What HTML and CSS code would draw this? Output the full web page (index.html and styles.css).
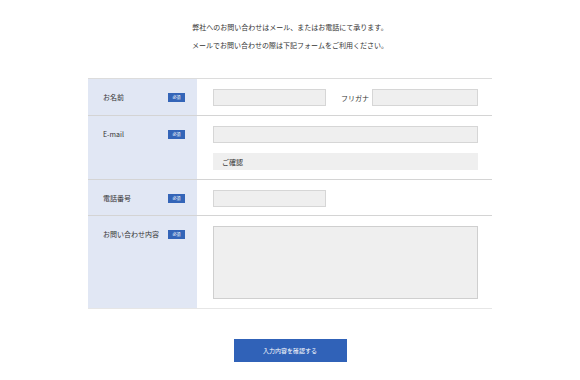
FILE: index.html
```html
<!DOCTYPE html>
<html lang="ja">
<head>
    <meta charset="UTF-8">
    <meta name="viewport" content="width=device-width, initial-scale=1.0">
    <title>お問い合わせ</title>
    <link rel="stylesheet" href="styles.css">
</head>
<body>
    <div class="contact">
        <div class="intro">
            <p>弊社へのお問い合わせはメール、またはお電話にて承ります。</p>
            <p>メールでお問い合わせの際は下記フォームをご利用ください。</p>
        </div>

        <form class="contact-form">
            <div class="form-row">
                <div class="form-label"><span>お名前</span><span class="required">必須</span></div>
                <div class="form-field">
                    <div class="field-line">
                        <input type="text" class="input-short">
                        <span class="sub-label">フリガナ</span>
                        <input type="text" class="input-kana">
                    </div>
                </div>
            </div>

            <div class="form-row">
                <div class="form-label"><span>E-mail</span><span class="required">必須</span></div>
                <div class="form-field">
                    <input type="text" class="input-long">
                    <input type="text" class="input-long input-confirm" placeholder="ご確認">
                </div>
            </div>

            <div class="form-row row-tel">
                <div class="form-label"><span>電話番号</span><span class="required">必須</span></div>
                <div class="form-field">
                    <input type="text" class="input-short">
                </div>
            </div>

            <div class="form-row">
                <div class="form-label"><span>お問い合わせ内容</span><span class="required">必須</span></div>
                <div class="form-field">
                    <textarea class="input-long"></textarea>
                </div>
            </div>
        </form>

        <div class="actions">
            <button type="button">入力内容を確認する</button>
        </div>
    </div>
</body>
</html>
```

FILE: styles.css
```css
body {
    margin: 0;
    font-family: "Noto Sans CJK JP", "Noto Sans", sans-serif;
    color: #333;
    background-color: white;
}

.contact {
    width: 404px;
    margin: 0 auto;
}

.intro {
    padding-top: 22px;
    text-align: center;
    font-size: 7px;
}

.intro p {
    margin: 0 0 8px;
    line-height: 10px;
}

.contact-form {
    margin-top: 28px;
    border-top: 1px solid #dcdcdc;
    border-bottom: 1px solid #e6e6e6;
}

.form-row {
    display: flex;
    border-top: 1px solid #d4d4d4;
}

.form-row:first-child {
    border-top: none;
}

.form-label {
    flex: 0 0 109px;
    box-sizing: border-box;
    padding: 10px 12px 9px 15px;
    background-color: #e1e7f4;
    display: flex;
    justify-content: space-between;
    align-items: flex-start;
    font-size: 7px;
    line-height: 17px;
    color: #333;
}

.required {
    margin-top: 4px;
    width: 17px;
    height: 9px;
    line-height: 9px;
    text-align: center;
    background-color: #3465b8;
    color: white;
    font-size: 4px;
}

.form-field {
    flex: 1;
    min-width: 0;
    padding: 10px 14px 9px 16px;
    display: flex;
    flex-direction: column;
    gap: 10px;
}

.row-tel .form-label,
.row-tel .form-field {
    padding-bottom: 8px;
}

.field-line {
    display: flex;
    align-items: center;
}

input,
textarea {
    display: block;
    flex-shrink: 0;
    box-sizing: border-box;
    height: 17px;
    margin: 0;
    padding: 0 8px;
    border: 1px solid #d6d6d6;
    border-radius: 0;
    background-color: #efefef;
    font-family: inherit;
    font-size: 7px;
}

.input-short {
    width: 113px;
}

.input-kana {
    width: 106px;
}

.input-long {
    width: 265px;
}

.input-confirm {
    border-color: #efefef;
}

.input-confirm::placeholder {
    color: #333;
}

textarea {
    height: 73px;
    resize: none;
    border-color: #cfcfcf;
}

.sub-label {
    margin: 0 3px 0 15px;
    font-size: 7px;
    white-space: nowrap;
}

.actions {
    margin-top: 30px;
}

button {
    display: block;
    width: 113px;
    height: 23px;
    margin: 0 auto;
    border: none;
    background-color: #3062b8;
    color: white;
    font-family: inherit;
    font-size: 6px;
    cursor: pointer;
}
```
